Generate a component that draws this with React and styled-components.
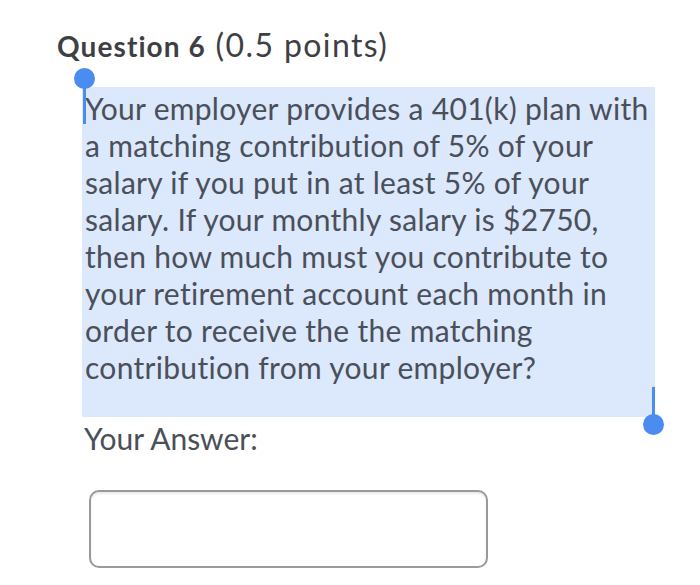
import React from "react";
import styled, { createGlobalStyle } from "styled-components";

const Global = createGlobalStyle`
  body {
    margin: 0;
    background: #ffffff;
    font-family: Lato, "Noto Sans", sans-serif;
  }
`;

const Page = styled.div`
  width: 700px;
  height: 585px;
  padding: 26px 0 0 57px;
  box-sizing: border-box;
  color: #494c55;
`;

const Heading = styled.h2`
  margin: 0;
  font-weight: 400;
  font-size: 32px;
  line-height: 38px;
  letter-spacing: 1.4px;
  color: #3d3f45;
`;

const Strong = styled.span`
  font-weight: 700;
  font-size: 28px;
  letter-spacing: 1.1px;
`;

const Selection = styled.div`
  position: relative;
  margin: 22px 0 0 25px;
  width: 573px;
  padding: 3px 0 31px 3px;
  background: #dce8fb;
  box-sizing: border-box;
`;

const Body = styled.p`
  margin: 0;
  font-size: 30px;
  line-height: 37px;
  letter-spacing: 0.3px;
  color: #4a4f5a;
`;

const Handle = styled.div`
  position: absolute;
  left: ${(p) => p.x}px;
  top: ${(p) => p.y}px;
  width: 3px;
  height: ${(p) => p.h}px;
  background: #4a8cf0;

  &::after {
    content: "";
    position: absolute;
    left: -9px;
    ${(p) => (p.end ? "bottom: -12px;" : "top: -13px;")}
    width: 21px;
    height: 21px;
    border-radius: 50%;
    background: #4a8cf0;
  }
`;

const Label = styled.div`
  margin: 3px 0 0 27px;
  font-size: 30px;
  line-height: 37px;
  color: #4a4f5a;
`;

const Input = styled.div`
  margin: 33px 0 0 32px;
  width: 399px;
  height: 78px;
  border: 2px solid #9a9a9a;
  border-radius: 10px;
  box-sizing: border-box;
  box-shadow: inset 0 2px 2px rgba(0, 0, 0, 0.08);
`;

const lines = [
  "Your employer provides a 401(k) plan with",
  "a matching contribution of 5% of your",
  "salary if you put in at least 5% of your",
  "salary. If your monthly salary is $2750,",
  "then how much must you contribute to",
  "your retirement account each month in",
  "order to receive the the matching",
  "contribution from your employer?",
];

export default function App() {
  return (
    <Page>
      <Global />
      <Heading>
        <Strong>Question 6</Strong> (0.5 points)
      </Heading>
      <Selection>
        <Handle x={1} y={-6} h={43} />
        <Body>
          {lines.map((l, i) => (
            <React.Fragment key={i}>
              {l}
              {i < lines.length - 1 && <br />}
            </React.Fragment>
          ))}
        </Body>
        <Handle x={570} y={300} h={36} end />
      </Selection>
      <Label>Your Answer:</Label>
      <Input />
    </Page>
  );
}
